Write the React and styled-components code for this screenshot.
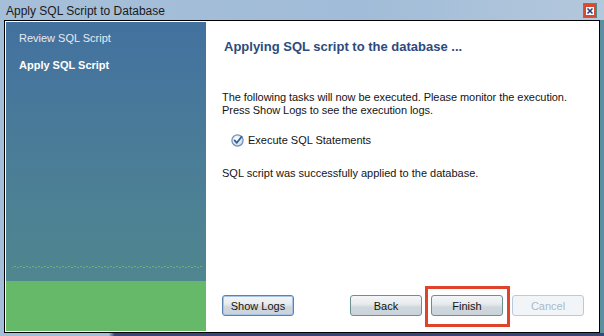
import styled, { createGlobalStyle } from 'styled-components';

const GlobalStyle = createGlobalStyle`
  html, body {
    margin: 0;
    padding: 0;
    background: #a4bed9;
  }
  body {
    font-family: "Liberation Sans", Arial, sans-serif;
  }
`;

const Window = styled.div`
  width: 604px;
  height: 336px;
  display: flex;
  flex-direction: column;
  background: #a4bed9;
  overflow: hidden;
`;

const TitleBar = styled.div`
  height: 22px;
  display: flex;
  align-items: center;
  justify-content: space-between;
  padding: 0 7px 0 6px;
  background: linear-gradient(90deg, #a6bfd9 0%, #a1bcd8 60%, #b4c8dc 100%);
`;

const Title = styled.span`
  font-size: 12px;
  color: #1a1a1a;
  padding-top: 1px;
`;

const CloseButton = styled.div`
  width: 14px;
  height: 15px;
  display: flex;
  margin-top: 1px;
`;

const Body = styled.div`
  display: flex;
  flex: 1;
  background: linear-gradient(90deg, #a4bed9 0%, #a4bed9 98%, #5c8fa0 99%, #5c8fa0 100%);
`;

const Frame = styled.div`
  margin-left: 4px;
  width: 592px;
  height: 309px;
  border: 1px solid #000;
  display: flex;
  background: #fff;
  padding: 1px;
`;

const Sidebar = styled.div`
  width: 200px;
  display: flex;
  flex-direction: column;
  background: linear-gradient(180deg, #43719f 0%, #4a7c98 40%, #518a8c 100%);
`;

const SidebarSteps = styled.div`
  flex: 1;
  display: flex;
  flex-direction: column;
  gap: 13px;
  padding: 9px 0 0 13px;
`;

const Step = styled.div`
  font-size: 11px;
  line-height: 14px;
  color: ${p => (p.active ? '#fff' : '#e4ebf3')};
  font-weight: ${p => (p.active ? 'bold' : 'normal')};
`;

/* dithered band where the blue fades into the green footer */
const SidebarFade = styled.div`
  height: 16px;
  margin: 0 4px 0 6px;
  background-image:
    radial-gradient(circle, #6fae78 0.6px, transparent 0.9px),
    radial-gradient(circle, #6fae78 0.6px, transparent 0.9px);
  background-size: 6px 3px, 6px 3px;
  background-position: 0 4px, 3px 5px;
  background-repeat: repeat-x;
  padding-top: 4px;
  background-clip: content-box;
`;

const SidebarFooter = styled.div`
  height: 50px;
  background: #67b96a;
`;

const Content = styled.div`
  flex: 1;
  display: flex;
  flex-direction: column;
  padding: 17px 14px 15px 16px;
`;

const Heading = styled.h1`
  margin: 0 0 0 2px;
  font-size: 13px;
  line-height: 16px;
  font-weight: bold;
  color: #2e4a7c;
`;

const Paragraph = styled.p`
  margin: ${p => p.top || 0}px 0 0;
  font-size: 11px;
  line-height: 13px;
  color: #141414;
  letter-spacing: ${p => (p.tight ? '-0.06px' : 'normal')};
`;

const TaskRow = styled.div`
  display: flex;
  align-items: center;
  gap: 4px;
  margin: 17px 0 0 9px;
  font-size: 11px;
  line-height: 13px;
  color: #141414;
`;

const Spacer = styled.div`
  flex: 1;
`;

const Footer = styled.div`
  display: flex;
  align-items: center;
  gap: 9px;
`;

const Button = styled.button`
  width: 72px;
  height: 21px;
  padding: 0;
  font-family: "Liberation Sans", Arial, sans-serif;
  font-size: 11px;
  color: ${p => (p.disabled ? '#a9bac9' : '#141414')};
  border: 1px solid ${p => (p.focused ? '#5a82b0' : p.disabled ? '#b9cad8' : '#6a9090')};
  border-radius: 3px;
  background: ${p =>
    p.disabled
      ? '#f2f5f8'
      : 'linear-gradient(180deg, #f4f6f8 0%, #e8ecef 40%, #cfd7dc 60%, #cad3d9 100%)'};
  box-shadow: ${p => (p.focused ? 'inset 0 0 0 1px #a8c4e4' : 'none')};
`;

const HighlightWrap = styled.div`
  position: relative;
  display: flex;
`;

const Highlight = styled.span`
  position: absolute;
  left: -6px;
  right: -7px;
  top: -9px;
  bottom: -11px;
  border: 3px solid #e0432c;
  pointer-events: none;
`;

const BottomStrip = styled.div`
  height: 3px;
  background: linear-gradient(90deg, #a4bed9 0%, #a4bed9 18%, #3b4678 19%, #3b4678 100%);
`;

const CloseIcon = () => (
  <svg width="14" height="15" viewBox="0 0 14 15">
    <rect x="0.5" y="0.5" width="13" height="14" fill="#d9492f" stroke="#4f8a8a" />
    <rect x="3" y="4" width="8" height="8" fill="#fff" />
    <path d="M4.5 5.5 L9.5 10.5 M9.5 5.5 L4.5 10.5" stroke="#2b3d7a" strokeWidth="1.6" />
  </svg>
);

const CheckIcon = () => (
  <svg width="13" height="13" viewBox="0 0 13 13">
    <defs>
      <radialGradient id="chk" cx="0.4" cy="0.35" r="0.7">
        <stop offset="0" stopColor="#ffffff" />
        <stop offset="1" stopColor="#c9d8ea" />
      </radialGradient>
    </defs>
    <circle cx="6.5" cy="6.5" r="5.6" fill="url(#chk)" stroke="#6f8fb5" strokeWidth="1.2" />
    <path d="M3.6 6.4 L5.8 8.8 L10.6 2.8" fill="none" stroke="#2f5f96" strokeWidth="1.8" strokeLinecap="round" strokeLinejoin="round" />
  </svg>
);

export default function App() {
  return (
    <>
      <GlobalStyle />
      <Window>
        <TitleBar>
          <Title>Apply SQL Script to Database</Title>
          <CloseButton>
            <CloseIcon />
          </CloseButton>
        </TitleBar>
        <Body>
          <Frame>
            <Sidebar>
              <SidebarSteps>
                <Step>Review SQL Script</Step>
                <Step active>Apply SQL Script</Step>
              </SidebarSteps>
              <SidebarFade />
              <SidebarFooter />
            </Sidebar>
            <Content>
              <Heading>Applying SQL script to the database ...</Heading>
              <Paragraph top={36} tight>
                The following tasks will now be executed. Please monitor the execution.
                <br />
                Press Show Logs to see the execution logs.
              </Paragraph>
              <TaskRow>
                <CheckIcon />
                <span>Execute SQL Statements</span>
              </TaskRow>
              <Paragraph top={20}>SQL script was successfully applied to the database.</Paragraph>
              <Spacer />
              <Footer>
                <Button focused>Show Logs</Button>
                <Spacer />
                <Button>Back</Button>
                <HighlightWrap>
                  <Button>Finish</Button>
                  <Highlight />
                </HighlightWrap>
                <Button disabled>Cancel</Button>
              </Footer>
            </Content>
          </Frame>
        </Body>
        <BottomStrip />
      </Window>
    </>
  );
}
